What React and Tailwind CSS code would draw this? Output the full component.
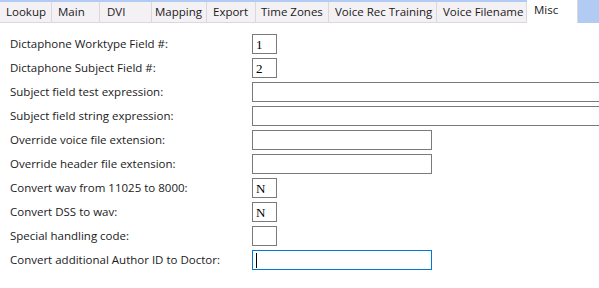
import React from "react";

const tabs = [
  { label: "Lookup", w: "w-[52px]", pad: "pl-[6px]" },
  { label: "Main", w: "w-[48px]", pad: "pl-[6px]" },
  { label: "DVI", w: "w-[52px]", pad: "pl-[7px]" },
  { label: "Mapping", w: "w-[55px]", pad: "pl-[3px]" },
  { label: "Export", w: "w-[49px]", pad: "pl-[6px]" },
  { label: "Time Zones", w: "w-[73px]", pad: "pl-[5px]" },
  { label: "Voice Rec Training", w: "w-[108px]", pad: "pl-[6px]" },
  { label: "Voice Filename", w: "w-[90px]", pad: "pl-[6px]" },
];

const rows = [
  { label: "Dictaphone Worktype Field #:", box: "w-[25px]", value: "1" },
  { label: "Dictaphone Subject Field #:", box: "w-[25px]", value: "2" },
  { label: "Subject field test expression:", box: "w-[360px] border-r-0" },
  { label: "Subject field string expression:", box: "w-[360px] border-r-0" },
  { label: "Override voice file extension:", box: "w-[180px]" },
  { label: "Override header file extension:", box: "w-[180px]" },
  { label: "Convert wav from 11025 to 8000:", box: "w-[25px]", value: "N" },
  { label: "Convert DSS to wav:", box: "w-[25px]", value: "N" },
  { label: "Special handling code:", box: "w-[25px]" },
  { label: "Convert additional Author ID to Doctor:", box: "w-[180px]", focus: true },
];

const Field = ({ label, box, value, focus }) => {
  return (
    <div className="flex items-center h-[24px]">
      <div className="w-[252px] shrink-0 pl-[10px] text-[11.5px] text-[#1a1a1a] whitespace-nowrap">
        {label}
      </div>
      <div
        className={`h-[20px] shrink-0 ${box} border flex items-center pl-[3px] ${
          focus ? "border-[#0078d7]" : "border-[#7a7a7a]"
        }`}
      >
        {focus && <div className="w-[1px] h-[15px] bg-black" />}
        {value && (
          <span className="text-[13px] leading-none text-black [font-family:'Liberation_Serif',serif]">
            {value}
          </span>
        )}
      </div>
    </div>
  );
};

export default function App() {
  return (
    <div className="w-[599px] h-[288px] bg-white overflow-hidden [font-family:'Open_Sans',sans-serif]">
      <div className="flex h-[23px] bg-[#b2cbf3]">
        {tabs.map((t) => (
          <div
            key={t.label}
            className={`${t.w} ${t.pad} shrink-0 whitespace-nowrap mt-[2px] h-[21px] bg-[#f4f1f5] border-r border-b border-[#d9d9d9] text-[11.5px] leading-[20px] text-[#1a1a1a]`}
          >
            {t.label}
          </div>
        ))}
        <div className="w-[51px] shrink-0 h-[23px] bg-white border-r border-[#d9d9d9] pl-[7px] text-[11.5px] leading-[20px] text-[#1a1a1a]">
          Misc
        </div>
      </div>
      <div className="pt-[9px]">
        {rows.map((r) => (
          <Field key={r.label} {...r} />
        ))}
      </div>
    </div>
  );
}
